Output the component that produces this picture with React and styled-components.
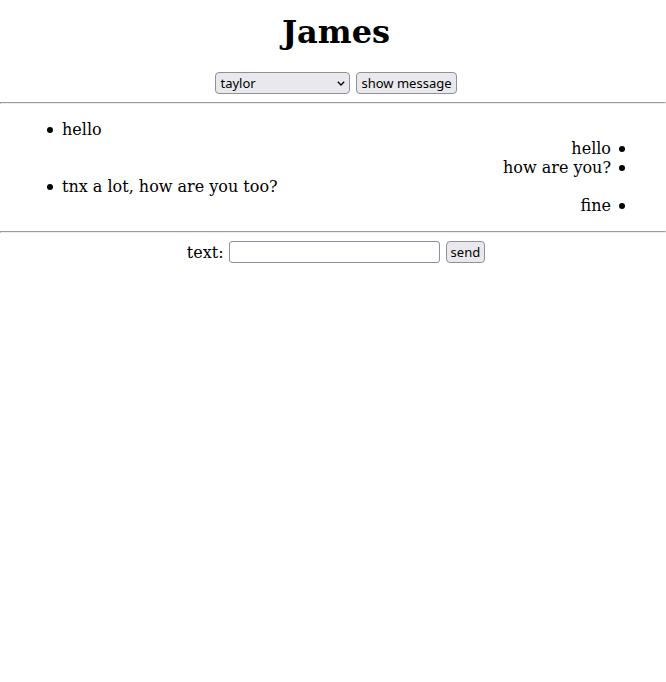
import React from "react";
import styled, { createGlobalStyle } from "styled-components";

const Global = createGlobalStyle`
  body {
    margin: 0;
    font-family: "DejaVu Serif", serif;
    font-size: 16px;
    color: #000;
    background: #fff;
  }
`;

const Title = styled.h1`
  text-align: center;
  font-size: 32px;
  margin: 13px 0 21px;
  padding-left: 6px;
`;

const Bar = styled.div`
  display: flex;
  justify-content: center;
  align-items: center;
  gap: 6px;
  padding-left: 6px;
`;

const control = `
  box-sizing: border-box;
  height: 22px;
  font-family: "Noto Sans", sans-serif;
  font-size: 13px;
  color: #000;
  border: 1px solid #8f8f9d;
  border-radius: 4px;
  background: #e9e9ed;
  margin: 0;
`;

const SelectWrap = styled.span`
  position: relative;
  display: inline-flex;
`;

const Select = styled.select`
  ${control}
  appearance: none;
  width: 135px;
  padding: 0 20px 0 4px;
`;

const Chevron = styled.svg`
  position: absolute;
  right: 5px;
  top: 9px;
  pointer-events: none;
`;

const Button = styled.button`
  ${control}
  padding: 0 4px;
`;

const Rule = styled.hr`
  margin: 8px 0;
`;

const List = styled.ul`
  list-style: none;
  margin: 16px 0;
  padding: 0 41px 0 47px;
  display: flex;
  flex-direction: column;
`;

const Item = styled.li`
  display: flex;
  align-items: center;
  gap: ${(p) => (p.$mine ? "8px" : "9px")};
  justify-content: ${(p) => (p.$mine ? "flex-end" : "flex-start")};
  line-height: 19px;
`;

const Dot = styled.span`
  flex: none;
  width: 6px;
  height: 6px;
  border-radius: 50%;
  background: #000;
  order: ${(p) => (p.$mine ? 1 : 0)};
`;

const Form = styled.div`
  display: flex;
  justify-content: center;
  align-items: center;
  gap: 5px;
  padding-left: 6px;
`;

const Send = styled(Button)`
  margin-left: 1px;
`;

const Input = styled.input`
  ${control}
  background: #fff;
  border-radius: 3px;
  width: 211px;
  padding: 0 4px;
`;

const messages = [
  { text: "hello", mine: false },
  { text: "hello", mine: true },
  { text: "how are you?", mine: true },
  { text: "tnx a lot, how are you too?", mine: false },
  { text: "fine", mine: true },
];

export default function App() {
  return (
    <>
      <Global />
      <Title>James</Title>
      <Bar>
        <SelectWrap>
          <Select defaultValue="taylor">
            <option value="taylor">taylor</option>
          </Select>
          <Chevron width="8" height="5" viewBox="0 0 8 5">
            <path d="M0.8 0.8 L4 4 L7.2 0.8" fill="none" stroke="#000" strokeWidth="1.3" />
          </Chevron>
        </SelectWrap>
        <Button>show message</Button>
      </Bar>
      <Rule />
      <List>
        {messages.map((m, i) => (
          <Item key={i} $mine={m.mine}>
            <Dot $mine={m.mine} />
            <span>{m.text}</span>
          </Item>
        ))}
      </List>
      <Rule />
      <Form>
        <span>text:</span>
        <Input type="text" />
        <Send>send</Send>
      </Form>
    </>
  );
}
